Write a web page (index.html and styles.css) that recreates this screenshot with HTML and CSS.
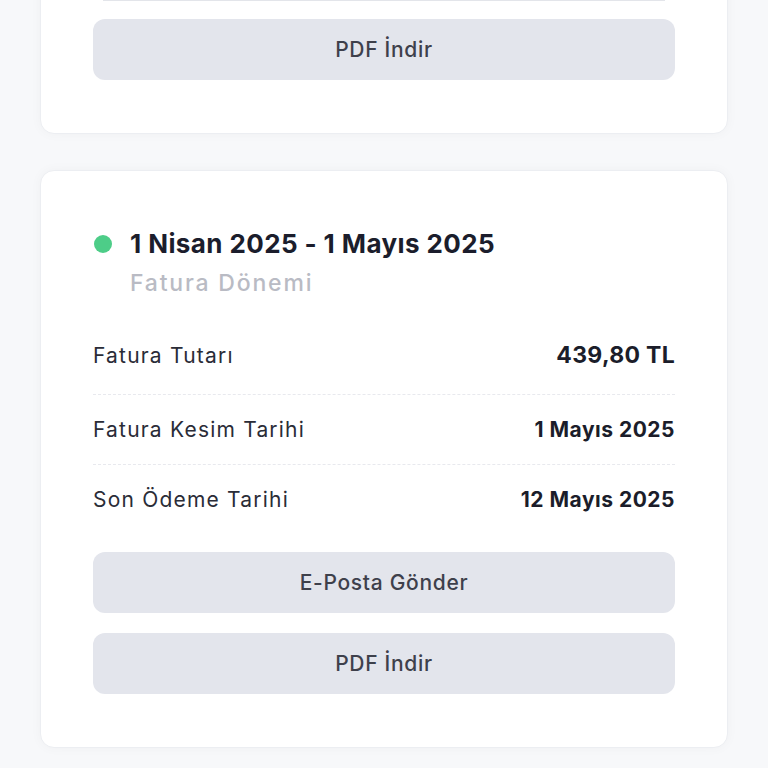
FILE: index.html
```html
<!DOCTYPE html>
<html lang="tr">
<head>
<meta charset="utf-8">
<link rel="stylesheet" href="styles.css">
</head>
<body>
<div class="page">
  <section class="card card-top">
    <div class="top-line"></div>
    <button class="btn">PDF İndir</button>
  </section>
  <section class="card">
    <div class="head">
      <span class="dot"></span>
      <div>
        <div class="title">1 Nisan 2025 - 1 Mayıs 2025</div>
        <div class="subtitle">Fatura Dönemi</div>
      </div>
    </div>
    <div class="rows">
      <div class="row row-first"><span class="label">Fatura Tutarı</span><span class="value value-big">439,80 TL</span></div>
      <div class="row"><span class="label">Fatura Kesim Tarihi</span><span class="value">1 Mayıs 2025</span></div>
      <div class="row"><span class="label">Son Ödeme Tarihi</span><span class="value">12 Mayıs 2025</span></div>
    </div>
    <div class="actions">
      <button class="btn">E-Posta Gönder</button>
      <button class="btn">PDF İndir</button>
    </div>
  </section>
</div>
</body>
</html>
```
FILE: styles.css
```css
html, body {
  margin: 0;
  padding: 0;
  background: #f7f8fa;
  font-family: "Inter", "Noto Sans", sans-serif;
  height: 768px;
  overflow: hidden;
}
.page {
  padding: 0 40px;
  display: flex;
  flex-direction: column;
  gap: 36px;
}
.card {
  background: #ffffff;
  border: 1px solid #eceef2;
  border-radius: 14px;
  padding: 54px 52px 53px;
  box-shadow: 0 0 12px rgba(20, 30, 60, 0.035);
}
.card-top {
  margin-top: -60px;
  padding-top: 59px;
  border-top-left-radius: 0;
  border-top-right-radius: 0;
}
.top-line {
  height: 1px;
  background: #e3e5ea;
  margin: 0 10px 18px;
}
.btn {
  display: block;
  width: 100%;
  height: 61px;
  border: none;
  border-radius: 12px;
  background: #e3e5ec;
  color: #3e404b;
  font-family: inherit;
  font-size: 21px;
  font-weight: 500;
  letter-spacing: 0.7px;
  padding: 0;
}
.head {
  display: flex;
  align-items: flex-start;
  gap: 18px;
  padding-left: 1px;
}
.dot {
  width: 18px;
  height: 18px;
  border-radius: 50%;
  background: #4dcd88;
  margin-top: 10px;
  flex: none;
}
.title {
  font-size: 26px;
  font-weight: 700;
  color: #1b1d2c;
  line-height: 38px;
  letter-spacing: 0.4px;
}
.subtitle {
  font-size: 23px;
  font-weight: 500;
  color: #b9bbc4;
  line-height: 30px;
  margin-top: 5px;
  letter-spacing: 1.8px;
}
.rows {
  margin-top: 20px;
}
.row {
  display: flex;
  justify-content: space-between;
  align-items: center;
  padding: 21px 0;
  line-height: 27px;
  border-top: 1px dashed #e8e9ee;
}
.row-first {
  border-top: none;
  padding: 22px 0 24px;
}
.label {
  font-size: 21px;
  color: #2a2c37;
  letter-spacing: 1.2px;
}
.value {
  font-size: 21px;
  font-weight: 700;
  color: #1b1d2a;
  letter-spacing: 0.5px;
}
.value-big {
  font-size: 23px;
  line-height: 30px;
  letter-spacing: 0.3px;
}
.actions {
  margin-top: 18px;
  display: flex;
  flex-direction: column;
  gap: 20px;
}
```
